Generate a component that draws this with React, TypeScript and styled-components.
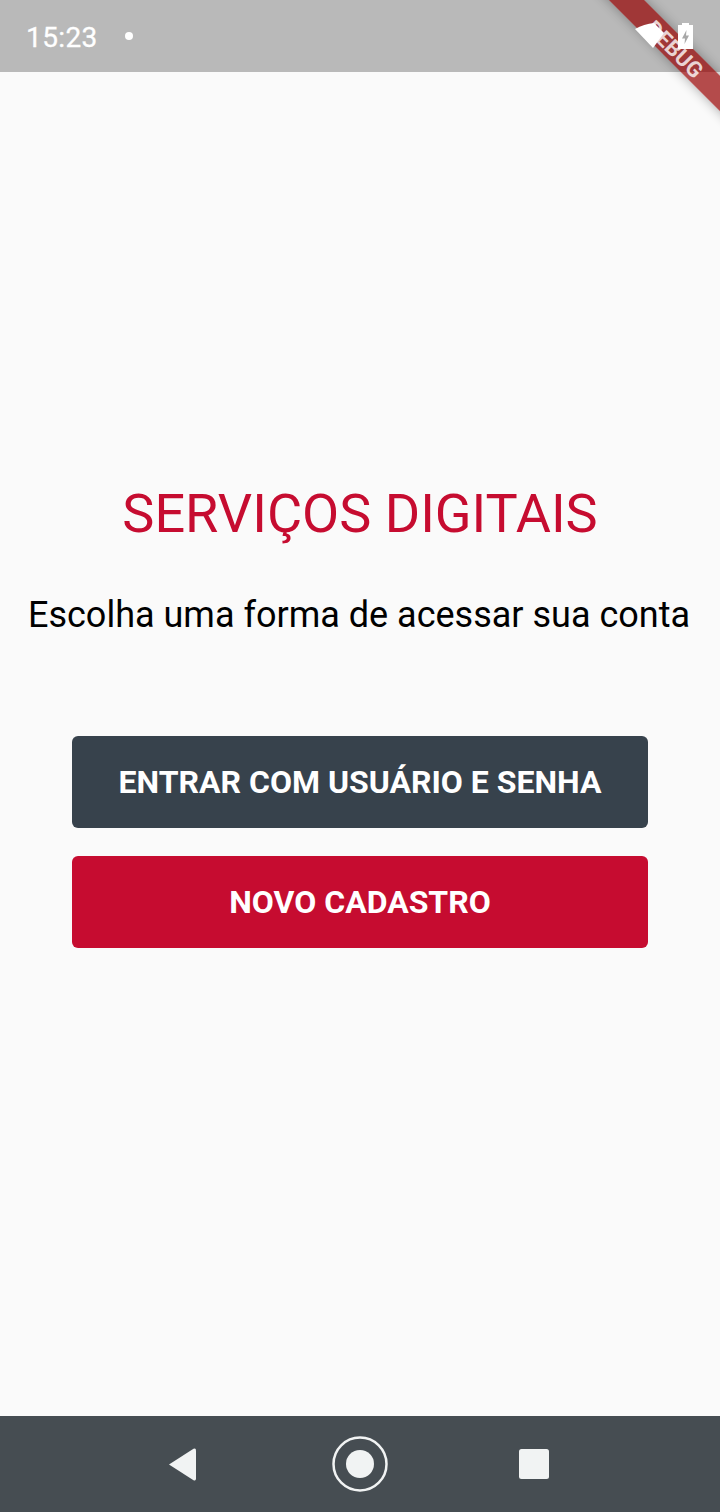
import React from "react";
import styled, { createGlobalStyle } from "styled-components";

const Global = createGlobalStyle`
  html, body { margin: 0; padding: 0; background: #fafafa; }
  * { box-sizing: border-box; }
`;

const Screen = styled.div`
  position: relative;
  width: 720px;
  height: 1512px;
  overflow: hidden;
  display: flex;
  flex-direction: column;
  background: #fafafa;
  font-family: Roboto, "Liberation Sans", sans-serif;
`;

const StatusBar = styled.div`
  height: 72px;
  flex: none;
  background: #b9b9b9;
  display: flex;
  align-items: center;
  padding: 0 27px 0 26px;
  color: #fff;
`;

const Clock = styled.span`
  font-size: 28px;
  letter-spacing: 0.4px;
  line-height: 32px;
  padding-top: 3px;
  -webkit-text-stroke: 0.3px #fff;
`;

const Dot = styled.span`
  width: 8px;
  height: 8px;
  border-radius: 50%;
  background: #fff;
  margin-left: 27px;
`;

const StatusIcons = styled.div`
  position: relative;
  z-index: 2;
  margin-left: auto;
  display: flex;
  align-items: center;
  gap: 13px;
`;

const Main = styled.main`
  flex: 1;
  display: flex;
  flex-direction: column;
  align-items: center;
  padding-top: 412px;
`;

const Title = styled.h1`
  margin: 0;
  font-size: 54px;
  line-height: 60px;
  font-weight: 400;
  color: #c60c30;
`;

const Subtitle = styled.p`
  margin: 50px 2px 0 0;
  font-size: 36px;
  line-height: 42px;
  font-weight: 400;
  color: #000;
  white-space: nowrap;
`;

const Actions = styled.div`
  margin-top: 100px;
  width: 576px;
  display: flex;
  flex-direction: column;
  gap: 28.4px;
`;

const ActionButton = styled.button<{ $bg: string }>`
  height: 92px;
  border: 0;
  border-radius: 6px;
  background: ${(p) => p.$bg};
  color: #fff;
  font-family: inherit;
  font-size: 32px;
  font-weight: 700;
  padding: 0;
`;

const NavBar = styled.nav`
  height: 96px;
  flex: none;
  background: #464d52;
  display: flex;
  align-items: center;
  justify-content: center;
  padding-right: 4px;
`;

const NavSlot = styled.div<{ $after?: number }>`
  width: 56px;
  height: 56px;
  margin-right: ${(p) => p.$after ?? 0}px;
  display: flex;
  align-items: center;
  justify-content: center;
`;

const Banner = styled.div`
  position: absolute;
  top: 0;
  right: 0;
  width: 240px;
  height: 240px;
  overflow: hidden;
  pointer-events: none;
`;

const Ribbon = styled.div`
  position: absolute;
  top: 39px;
  left: 78px;
  width: 240px;
  height: 25px;
  padding-right: 8px;
  transform: rotate(45deg);
  background: rgba(150, 0, 0, 0.7);
  box-shadow: 0 0 12px rgba(0, 0, 0, 0.32);
  color: rgba(255, 255, 255, 0.78);
  font-size: 22px;
  font-weight: 700;
  line-height: 27px;
  text-align: center;
`;

export default function App() {
  return (
    <Screen>
      <Global />
      <StatusBar>
        <Clock>15:23</Clock>
        <Dot />
        <StatusIcons>
          <svg width="30" height="26" viewBox="0 0 30 26" aria-hidden="true">
            <path d="M0 6 Q9 1 19 0 L29 10 L18 25 Z" fill="#fff" />
          </svg>
          <svg width="15" height="26" viewBox="0 0 15 26" aria-hidden="true">
            <path d="M4 0 H11 V2 H15 V26 H0 V2 H4 Z" fill="#fff" />
            <path d="M8.5 7 L4 15.5 H7 L6.5 21 L11 12.5 H8 Z" fill="#a8a8a8" />
          </svg>
        </StatusIcons>
      </StatusBar>
      <Main>
        <Title>SERVIÇOS DIGITAIS</Title>
        <Subtitle>Escolha uma forma de acessar sua conta</Subtitle>
        <Actions>
          <ActionButton $bg="#37424c">ENTRAR COM USUÁRIO E SENHA</ActionButton>
          <ActionButton $bg="#c60c30">NOVO CADASTRO</ActionButton>
        </Actions>
      </Main>
      <NavBar>
        <NavSlot $after={122}>
          <svg width="28" height="33" viewBox="0 0 28 33" aria-hidden="true">
            <path d="M1 16.5 L25.5 0.8 Q28 -0.4 28 2.5 V30.5 Q28 33.4 25.5 32.2 Z" fill="#f1f3f3" />
          </svg>
        </NavSlot>
        <NavSlot $after={118}>
          <svg width="56" height="56" viewBox="0 0 56 56" aria-hidden="true">
            <circle cx="28" cy="28" r="26.5" fill="none" stroke="#f1f3f3" strokeWidth="2.5" />
            <circle cx="28" cy="28" r="14" fill="#f1f3f3" />
          </svg>
        </NavSlot>
        <NavSlot>
          <svg width="30" height="30" viewBox="0 0 30 30" aria-hidden="true">
            <rect width="30" height="30" rx="2.5" fill="#f1f3f3" />
          </svg>
        </NavSlot>
      </NavBar>
      <Banner>
        <Ribbon>DEBUG</Ribbon>
      </Banner>
    </Screen>
  );
}
